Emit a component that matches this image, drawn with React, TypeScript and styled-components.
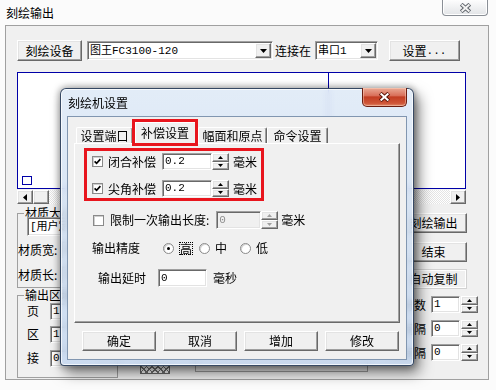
import React from "react";
import styled, { createGlobalStyle, css } from "styled-components";

const MONO = `"Liberation Mono", "Noto Sans CJK SC", monospace`;
const RED = "#e8151d";

const GlobalStyle = createGlobalStyle`
  *, *::before, *::after { box-sizing: border-box; }
  html, body { margin: 0; padding: 0; }
  body {
    width: 496px; height: 390px; overflow: hidden;
    background: #fbfbfb;
    font-family: "Noto Sans CJK SC", "Liberation Sans", sans-serif;
    font-size: 12px; line-height: 14px; color: #000;
  }
`;

const raised = css`
  background: #f0f0f0;
  border: 1px solid;
  border-color: #fff #696969 #696969 #fff;
  box-shadow: inset -1px -1px 0 #a0a0a0, inset 1px 1px 0 #e3e3e3;
`;

const sunken = css`
  border: 1px solid;
  border-color: #a0a0a0 #fff #fff #a0a0a0;
  box-shadow: inset 1px 1px 0 #696969, inset -1px -1px 0 #e3e3e3;
  padding: 1px;
`;

const Screen = styled.div`
  position: relative;
  width: 496px;
  height: 390px;
  overflow: hidden;
  display: flex;
  flex-direction: column;
`;

const TitleBar = styled.div`
  display: flex;
  align-items: flex-start;
  height: 25px;
  flex-shrink: 0;
  padding: 0 8px 0 6px;
`;

const WindowTitle = styled.span`
  margin-top: 6px;
  line-height: 14px;
`;

const OuterClose = styled.div`
  margin-left: auto;
  width: 46px;
  height: 16px;
  display: flex;
  align-items: center;
  justify-content: center;
  border: 1px solid #8a8f96;
  border-top: none;
  border-radius: 0 0 4px 4px;
  background: linear-gradient(#fdfdfd, #e2e4e7);
  box-shadow: inset 1px 0 0 #fff, inset -1px 0 0 #fff, inset 0 -1px 0 #fff;
`;

const MainFrame = styled.div`
  margin-left: 5px;
  width: 484px;
  height: 355px;
  flex-shrink: 0;
  border: 1px solid #a0a0a0;
  background: #f0f0f0;
  padding: 14px 10px 1px 11px;
  display: flex;
  flex-direction: column;
`;

const Toolbar = styled.div`
  display: flex;
  align-items: center;
  height: 21px;
  flex-shrink: 0;
`;

const Btn = styled.button<{ $w: number; $h?: number; $ml?: number; $mt?: number; $flat?: boolean }>`
  ${raised}
  width: ${(p) => p.$w}px;
  height: ${(p) => p.$h ?? 20}px;
  margin: ${(p) => p.$mt ?? 0}px 0 0 ${(p) => p.$ml ?? 0}px;
  padding: 0;
  flex-shrink: 0;
  font-family: inherit;
  font-size: 12px;
  line-height: 14px;
  color: #000;
  display: flex;
  align-items: center;
  justify-content: center;
  ${(p) =>
    p.$flat &&
    css`
      border-color: #d2d2d2;
      box-shadow: inset 1px 1px 0 #fff, inset -1px -1px 0 #fff;
    `}
`;

const Dots = styled.span`
  font-family: ${MONO};
  font-size: 11px;
`;

const Combo = styled.div<{ $w: number; $ml?: number }>`
  ${sunken}
  width: ${(p) => p.$w}px;
  height: 19px;
  margin-left: ${(p) => p.$ml ?? 0}px;
  flex-shrink: 0;
  background: #fff;
  display: flex;
  align-items: center;
`;

const ComboText = styled.span`
  flex: 1;
  padding-left: 1px;
  font-family: ${MONO};
  font-size: 11px;
  line-height: 14px;
  white-space: nowrap;
  overflow: hidden;
`;

const ComboBtn = styled.div`
  ${raised}
  width: 16px;
  height: 15px;
  flex-shrink: 0;
  display: flex;
  align-items: center;
  justify-content: center;
`;

const Txt = styled.span<{ $ml?: number; $grey?: boolean }>`
  margin-left: ${(p) => p.$ml ?? 0}px;
  line-height: 14px;
  white-space: nowrap;
  flex-shrink: 0;
  color: ${(p) => (p.$grey ? "#6d6d6d" : "#000")};
`;

const Canvas = styled.div`
  width: 449px;
  height: 117px;
  margin-top: 11px;
  flex-shrink: 0;
  border: 1px solid #0000a8;
  background: #fff;
  svg {
    display: block;
  }
`;

const HScroll = styled.div`
  display: flex;
  width: 449px;
  height: 14px;
  margin-top: 1px;
  flex-shrink: 0;
`;

const ScrollBtn = styled.div`
  ${raised}
  width: 16px;
  height: 14px;
  flex-shrink: 0;
  display: flex;
  align-items: center;
  justify-content: center;
`;

const ScrollTrack = styled.div`
  flex: 1;
  background-color: #fff;
  background-image: repeating-conic-gradient(#e4e4e4 0 25%, #fff 0 50%);
  background-size: 2px 2px;
`;

const BottomArea = styled.div`
  display: flex;
  height: 174px;
  flex-shrink: 0;
`;

const LeftCol = styled.div`
  width: 101px;
  display: flex;
  flex-direction: column;
  flex-shrink: 0;
`;

const Group = styled.fieldset<{ $mt: number; $pb: number }>`
  margin: ${(p) => p.$mt}px 0 0 0;
  padding: 0 0 ${(p) => p.$pb}px 0;
  min-width: 0;
  width: 101px;
  border: 1px solid #a0a0a0;
  display: flex;
  flex-direction: column;
  align-items: flex-start;
`;

const GroupLegend = styled.legend`
  margin-left: 6px;
  padding: 0 1px;
  height: 8px;
  line-height: 8px;
  font-size: 12px;
  white-space: nowrap;
`;

const Row = styled.div<{ $h: number; $mt?: number; $ml?: number }>`
  display: flex;
  align-items: center;
  height: ${(p) => p.$h}px;
  margin-top: ${(p) => p.$mt ?? 0}px;
  margin-left: ${(p) => p.$ml ?? 0}px;
  flex-shrink: 0;
`;

const Edit = styled.div<{ $w: number; $h: number; $ml?: number; $disabled?: boolean }>`
  ${sunken}
  width: ${(p) => p.$w}px;
  height: ${(p) => p.$h}px;
  margin-left: ${(p) => p.$ml ?? 0}px;
  flex-shrink: 0;
  background: ${(p) => (p.$disabled ? "#f0f0f0" : "#fff")};
  color: ${(p) => (p.$disabled ? "#8f8f8f" : "#000")};
  font-family: ${MONO};
  font-size: 11px;
  line-height: 13px;
  padding-left: 2px;
  display: flex;
  align-items: center;
  white-space: nowrap;
  overflow: hidden;
`;

const SpinBox = styled.div<{ $h: number; $ml?: number }>`
  width: 17px;
  height: ${(p) => p.$h}px;
  margin-left: ${(p) => p.$ml ?? 0}px;
  flex-shrink: 0;
  display: flex;
  flex-direction: column;
`;

const SpinBtn = styled.div`
  ${raised}
  flex: 1;
  display: flex;
  align-items: center;
  justify-content: center;
`;

const MiddleCol = styled.div`
  flex: 1;
  display: flex;
  align-items: flex-end;
`;

const Hatch = styled.div`
  margin: 0 0 4px 22px;
  width: 30px;
  height: 9px;
  flex-shrink: 0;
  border: 1px solid #6a6a6a;
  background-color: #fff;
  background-image: repeating-linear-gradient(45deg, #777 0 1px, transparent 1px 4px),
    repeating-linear-gradient(-45deg, #777 0 1px, transparent 1px 4px);
`;

const HiddenBox = styled.div`
  margin: 0 0 6px 25px;
  width: 173px;
  height: 60px;
  flex-shrink: 0;
  border: 1px solid #a0a0a0;
`;

const RightCol = styled.div`
  width: 83px;
  flex-shrink: 0;
  display: flex;
  flex-direction: column;
  align-items: flex-start;
`;

const SpinRow = styled.div`
  width: 83px;
  height: 17px;
  margin-top: 7px;
  display: flex;
  align-items: center;
  justify-content: flex-end;
`;

/* ---------------- dialog ---------------- */

const Dialog = styled.div`
  position: absolute;
  left: 60px;
  top: 88px;
  width: 354px;
  height: 278px;
  z-index: 5;
  display: flex;
  flex-direction: column;
  border: 1px solid rgba(38, 56, 84, 0.9);
  border-radius: 6px 6px 4px 4px;
  background: linear-gradient(180deg, rgba(220, 232, 246, 0.82) 0%, rgba(192, 211, 236, 0.82) 100%);
  backdrop-filter: blur(3px);
  box-shadow: inset 0 0 0 1px rgba(255, 255, 255, 0.7), 0 0 7px 1px rgba(0, 0, 0, 0.35),
    5px 7px 14px rgba(0, 0, 0, 0.5);
`;

const DialogTitleBar = styled.div`
  display: flex;
  align-items: center;
  height: 27px;
  padding-left: 7px;
  flex-shrink: 0;
`;

const DialogTitle = styled.span`
  line-height: 14px;
`;

const RedClose = styled.div`
  align-self: flex-start;
  margin: -1px 6px 0 auto;
  width: 45px;
  height: 19px;
  display: flex;
  align-items: center;
  justify-content: center;
  border: 1px solid #6a1d10;
  border-top: none;
  border-radius: 0 0 5px 5px;
  background: linear-gradient(180deg, #eaa995 0%, #d9705a 42%, #c23d22 50%, #cf5638 85%, #e08a6c 100%);
  box-shadow: inset 0 0 0 1px rgba(255, 220, 200, 0.45);
`;

const Client = styled.div`
  margin: 0 6px 5px;
  height: 244px;
  flex-shrink: 0;
  border: 1px solid #8196b0;
  background: #f0f0f0;
  display: flex;
  flex-direction: column;
`;

const TabStrip = styled.div`
  position: relative;
  z-index: 1;
  display: flex;
  align-items: flex-start;
  height: 24px;
  margin: 2px 0 0 6px;
  padding-left: 2px;
  flex-shrink: 0;
`;

const Tab = styled.div<{ $w: number }>`
  width: ${(p) => p.$w}px;
  height: 16px;
  margin-top: 8px;
  flex-shrink: 0;
  display: flex;
  align-items: center;
  justify-content: center;
  border: 1px solid;
  border-bottom: none;
  border-color: #fff #696969 transparent #fff;
  box-shadow: inset -1px 0 0 #a0a0a0;
  border-radius: 2px 2px 0 0;
  line-height: 14px;
  white-space: nowrap;
`;

const ActiveTab = styled.div`
  width: 66px;
  height: 27px;
  margin-left: -1px;
  flex-shrink: 0;
  display: flex;
  align-items: center;
  justify-content: center;
  border: 3px solid ${RED};
  background: #f0f0f0;
  box-shadow: inset 1px 1px 0 #fff;
  line-height: 14px;
  white-space: nowrap;
`;

const TabPanel = styled.div`
  margin-left: 6px;
  width: 326px;
  height: 180px;
  flex-shrink: 0;
  border: 1px solid;
  border-color: #fff #696969 #696969 #fff;
  box-shadow: inset -1px -1px 0 #a0a0a0;
  display: flex;
  flex-direction: column;
  align-items: flex-start;
`;

const HighlightBox = styled.div`
  margin: 4px 0 0 9px;
  width: 180px;
  height: 53px;
  flex-shrink: 0;
  border: 3px solid ${RED};
  padding: 2px 0 0 5px;
  display: flex;
  flex-direction: column;
  gap: 10px;
`;

const CheckBox = styled.span`
  width: 11px;
  height: 11px;
  flex-shrink: 0;
  background: #fff;
  border: 1px solid #8a8a8a;
  box-shadow: inset 1px 1px 0 #cfcfcf;
  display: flex;
  align-items: center;
  justify-content: center;
`;

const Radio = styled.span<{ $ml?: number }>`
  width: 11px;
  height: 11px;
  margin-left: ${(p) => p.$ml ?? 0}px;
  flex-shrink: 0;
  border-radius: 50%;
  background: #fff;
  border: 1px solid #8a8a8a;
  box-shadow: inset 1px 1px 0 #d4d4d4;
  display: flex;
  align-items: center;
  justify-content: center;
`;

const RadioDot = styled.span`
  width: 3px;
  height: 3px;
  border-radius: 50%;
  background: #000;
`;

const FocusLabel = styled.span<{ $ml?: number }>`
  margin-left: ${(p) => p.$ml ?? 0}px;
  padding: 0 1px;
  line-height: 13px;
  outline: 1px dotted #000;
  outline-offset: -1px;
  flex-shrink: 0;
`;

const DialogButtons = styled.div`
  display: flex;
  gap: 7px;
  margin: 8px 0 0 14px;
`;

/* ---------------- small drawings ---------------- */

const CloseGlyph = ({ red }: { red?: boolean }) => (
  <svg width="13" height="10" viewBox="0 0 13 10">
    <path
      d="M2.2 1.3 L10.8 8.7 M10.8 1.3 L2.2 8.7"
      stroke={red ? "#5a1408" : "#5f646b"}
      strokeWidth="4"
      fill="none"
    />
    <path
      d="M2.6 1.6 L10.4 8.4 M10.4 1.6 L2.6 8.4"
      stroke={red ? "#ffffff" : "#f2f2f2"}
      strokeWidth="2"
      fill="none"
    />
  </svg>
);

const DownArrow = () => (
  <svg width="7" height="4" viewBox="0 0 7 4">
    <polygon points="0,0 7,0 3.5,4" fill="#000" />
  </svg>
);

const TinyArrow = ({ up, grey }: { up?: boolean; grey?: boolean }) => (
  <svg width="5" height="3" viewBox="0 0 5 3">
    <polygon points={up ? "2.5,0 5,3 0,3" : "0,0 5,0 2.5,3"} fill={grey ? "#a0a0a0" : "#000"} />
  </svg>
);

const SideArrow = ({ right }: { right?: boolean }) => (
  <svg width="4" height="7" viewBox="0 0 4 7">
    <polygon points={right ? "0,0 0,7 4,3.5" : "4,0 4,7 0,3.5"} fill="#000" />
  </svg>
);

const CheckMark = () => (
  <svg width="7" height="7" viewBox="0 0 7 7">
    <polyline points="0.6,3.3 2.6,5.3 6.4,1.2" fill="none" stroke="#000" strokeWidth="1.7" />
  </svg>
);

const Spinner = ({ h, ml, grey }: { h: number; ml?: number; grey?: boolean }) => (
  <SpinBox $h={h} $ml={ml}>
    <SpinBtn>
      <TinyArrow up grey={grey} />
    </SpinBtn>
    <SpinBtn>
      <TinyArrow grey={grey} />
    </SpinBtn>
  </SpinBox>
);

export default function App() {
  return (
    <>
      <GlobalStyle />
      <Screen>
        <TitleBar>
          <WindowTitle>刻绘输出</WindowTitle>
          <OuterClose>
            <CloseGlyph />
          </OuterClose>
        </TitleBar>

        <MainFrame>
          <Toolbar>
            <Btn $w={65} $h={21}>
              刻绘设备
            </Btn>
            <Combo $w={186} $ml={5}>
              <ComboText>图王FC3100-120</ComboText>
              <ComboBtn>
                <DownArrow />
              </ComboBtn>
            </Combo>
            <Txt $ml={2}>连接在</Txt>
            <Combo $w={63} $ml={4}>
              <ComboText>串口1</ComboText>
              <ComboBtn>
                <DownArrow />
              </ComboBtn>
            </Combo>
            <Btn $w={71} $h={21} $ml={11}>
              设置<Dots>...</Dots>
            </Btn>
          </Toolbar>

          <Canvas>
            <svg width="447" height="115" viewBox="0 0 447 115">
              <line x1="310.5" y1="0" x2="310.5" y2="115" stroke="#0000a8" strokeWidth="1" />
              <rect x="4.5" y="103.5" width="9" height="8" fill="none" stroke="#0000a8" strokeWidth="1" />
            </svg>
          </Canvas>

          <HScroll>
            <ScrollBtn>
              <SideArrow />
            </ScrollBtn>
            <ScrollBtn />
            <ScrollTrack />
            <ScrollBtn>
              <SideArrow right />
            </ScrollBtn>
          </HScroll>

          <BottomArea>
            <LeftCol>
              <Group $mt={5} $pb={2}>
                <GroupLegend>材质大小</GroupLegend>
                <Row $h={19} $ml={9}>
                  <Combo $w={88}>
                    <ComboText>[用户定义]</ComboText>
                    <ComboBtn>
                      <DownArrow />
                    </ComboBtn>
                  </Combo>
                </Row>
                <Row $h={20} $mt={4}>
                  <Txt>材质宽:</Txt>
                  <Edit $w={40} $h={18} $ml={4}>
                    600
                  </Edit>
                </Row>
                <Row $h={20} $mt={5}>
                  <Txt>材质长:</Txt>
                  <Edit $w={40} $h={18} $ml={4}>
                    1000
                  </Edit>
                </Row>
              </Group>
              <Group $mt={3} $pb={9}>
                <GroupLegend>输出区域</GroupLegend>
                <Row $h={20} $mt={2} $ml={9}>
                  <Txt>页</Txt>
                  <Edit $w={50} $h={17} $ml={11}>
                    1
                  </Edit>
                </Row>
                <Row $h={20} $mt={3} $ml={9}>
                  <Txt>区</Txt>
                  <Edit $w={50} $h={17} $ml={11}>
                    1
                  </Edit>
                </Row>
                <Row $h={20} $mt={4} $ml={9}>
                  <Txt>接</Txt>
                  <Edit $w={50} $h={17} $ml={11}>
                    0
                  </Edit>
                </Row>
              </Group>
            </LeftCol>

            <MiddleCol>
              <Hatch />
              <HiddenBox />
            </MiddleCol>

            <RightCol>
              <Btn $w={67} $ml={5} $mt={9}>
                刻绘输出
              </Btn>
              <Btn $w={67} $ml={5} $mt={9}>
                结束
              </Btn>
              <Btn $w={67} $ml={5} $mt={7} $flat>
                自动复制
              </Btn>
              <SpinRow>
                <Txt>份数</Txt>
                <Edit $w={29} $h={17} $ml={5}>
                  1
                </Edit>
                <Spinner h={17} ml={1} />
              </SpinRow>
              <SpinRow>
                <Txt>行间隔</Txt>
                <Edit $w={29} $h={17} $ml={5}>
                  0
                </Edit>
                <Spinner h={17} ml={1} />
              </SpinRow>
              <SpinRow>
                <Txt>列间隔</Txt>
                <Edit $w={29} $h={17} $ml={5}>
                  0
                </Edit>
                <Spinner h={17} ml={1} />
              </SpinRow>
            </RightCol>
          </BottomArea>
        </MainFrame>

        <Dialog>
          <DialogTitleBar>
            <DialogTitle>刻绘机设置</DialogTitle>
            <RedClose>
              <CloseGlyph red />
            </RedClose>
          </DialogTitleBar>
          <Client>
            <TabStrip>
              <Tab $w={57}>设置端口</Tab>
              <ActiveTab>补偿设置</ActiveTab>
              <Tab $w={69}>幅面和原点</Tab>
              <Tab $w={61}>命令设置</Tab>
            </TabStrip>
            <TabPanel>
              <HighlightBox>
                <Row $h={17}>
                  <CheckBox>
                    <CheckMark />
                  </CheckBox>
                  <Txt $ml={5}>闭合补偿</Txt>
                  <Edit $w={50} $h={17} $ml={6}>
                    0.2
                  </Edit>
                  <Spinner h={17} />
                  <Txt $ml={4}>毫米</Txt>
                </Row>
                <Row $h={17}>
                  <CheckBox>
                    <CheckMark />
                  </CheckBox>
                  <Txt $ml={5}>尖角补偿</Txt>
                  <Edit $w={50} $h={17} $ml={6}>
                    0.2
                  </Edit>
                  <Spinner h={17} />
                  <Txt $ml={4}>毫米</Txt>
                </Row>
              </HighlightBox>

              <Row $h={18} $mt={10} $ml={18}>
                <CheckBox />
                <Txt $ml={6}>限制一次输出长度:</Txt>
                <Edit $w={45} $h={18} $ml={7} $disabled>
                  0
                </Edit>
                <Spinner h={18} grey />
                <Txt $ml={3}>毫米</Txt>
              </Row>

              <Row $h={14} $mt={12} $ml={17}>
                <Txt>输出精度</Txt>
                <Radio $ml={23}>
                  <RadioDot />
                </Radio>
                <FocusLabel $ml={5}>高</FocusLabel>
                <Radio $ml={6} />
                <Txt $ml={5}>中</Txt>
                <Radio $ml={13} />
                <Txt $ml={5}>低</Txt>
              </Row>

              <Row $h={18} $mt={14} $ml={23}>
                <Txt>输出延时</Txt>
                <Edit $w={49} $h={18} $ml={12}>
                  0
                </Edit>
                <Txt $ml={6}>毫秒</Txt>
              </Row>
            </TabPanel>

            <DialogButtons>
              <Btn $w={74}>确定</Btn>
              <Btn $w={74}>取消</Btn>
              <Btn $w={74}>增加</Btn>
              <Btn $w={74}>修改</Btn>
            </DialogButtons>
          </Client>
        </Dialog>
      </Screen>
    </>
  );
}
